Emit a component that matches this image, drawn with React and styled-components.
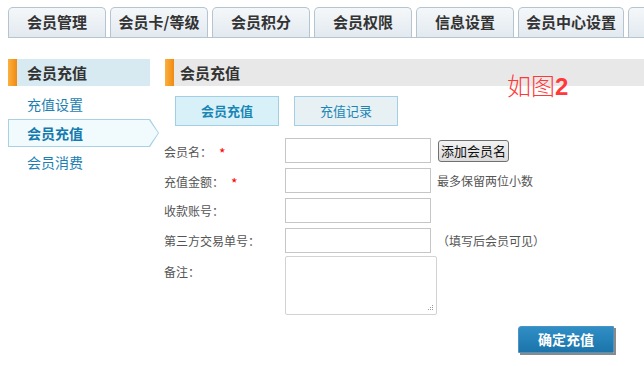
import React from 'react';
import styled, { createGlobalStyle, css } from 'styled-components';

const GlobalStyle = createGlobalStyle`
	html, body {
		margin: 0;
		padding: 0;
		background: #fff;
		overflow: hidden;
	}
	body {
		font-family: "Noto Sans CJK SC", "Liberation Sans", sans-serif;
		color: #333;
	}
`;

const Page = styled.div`
	width: 644px;
	height: 366px;
	padding: 7px 0 0 8px;
	box-sizing: border-box;
	position: relative;
	overflow: hidden;
`;

const TabBar = styled.div`
	display: flex;
	gap: 4px;
	height: 30px;
	border-bottom: 1px solid #b4c4d1;
	white-space: nowrap;
`;

const Tab = styled.div`
	flex: none;
	min-width: 98px;
	padding: 0 7px;
	box-sizing: border-box;
	height: 30px;
	line-height: 28px;
	text-align: center;
	font-size: 15px;
	font-weight: bold;
	color: #333;
	border: 1px solid #b4c4d1;
	border-bottom: none;
	border-radius: 5px 5px 0 0;
	background: linear-gradient(#f5f8fa, #e2e9ef);
`;

const Body = styled.div`
	display: flex;
	margin-top: 21px;
`;

const Sidebar = styled.div`
	width: 142px;
	flex: none;
`;

const Heading = styled.div`
	height: 27px;
	line-height: 27px;
	font-size: 15px;
	font-weight: bold;
	color: #333;
	border-left: 9px solid #f39419;
	padding-left: ${props => props.indent}px;
	background: ${props => props.bg};
	position: relative;
	&::before {
		content: '';
		position: absolute;
		left: -9px;
		top: 0;
		width: 9px;
		height: 100%;
		background: linear-gradient(90deg, #fbb040, #f08a10);
	}
`;

const MenuList = styled.div`
	margin-top: 4px;
	display: flex;
	flex-direction: column;
	gap: 1px;
`;

const MenuItem = styled.div`
	height: 28px;
	line-height: 28px;
	padding-left: 19px;
	font-size: 14px;
	color: #1b7fb3;
	position: relative;
	${props => props.active && css`
		width: 151px;
		box-sizing: border-box;
		font-weight: bold;
		color: #137aae;
		background: #a9d1e6;
		clip-path: polygon(0 0, calc(100% - 9px) 0, 100% 50%, calc(100% - 9px) 100%, 0 100%);
		&::before {
			content: '';
			position: absolute;
			inset: 1px;
			background: #f1fafd;
			clip-path: polygon(0 0, calc(100% - 9px) 0, 100% 50%, calc(100% - 9px) 100%, 0 100%);
		}
		span { position: relative; }
	`}
`;

const Main = styled.div`
	flex: 1;
	margin-left: 15px;
	position: relative;
`;

const Note = styled.div`
	position: absolute;
	left: 342px;
	top: 8px;
	font-size: 24px;
	color: #ff3838;
	font-family: "Noto Sans CJK SC", sans-serif;
	font-weight: 300;
	b {
		font-family: "Liberation Sans", sans-serif;
		font-weight: bold;
		font-size: 24px;
	}
`;

const SubTabs = styled.div`
	display: flex;
	gap: 15px;
	margin: 10px 0 0 10px;
`;

const SubTab = styled.div`
	width: 104px;
	height: 30px;
	box-sizing: border-box;
	line-height: 28px;
	text-align: center;
	font-size: 13px;
	color: #1a86b6;
	border: 1px solid #a3cfe4;
	background: ${props => props.active ? '#d8f1f8' : '#e7f0f3'};
	font-weight: ${props => props.active ? 'bold' : 'normal'};
`;

const Form = styled.div`
	margin-top: 12px;
	margin-left: -1px;
	display: flex;
	flex-direction: column;
	gap: 5px;
`;

const Row = styled.div`
	display: flex;
	align-items: ${props => props.top ? 'flex-start' : 'center'};
	min-height: 25px;
	font-size: 12px;
	color: #555;
`;

const Label = styled.div`
	width: 121px;
	flex: none;
	padding-top: ${props => props.top ? '5px' : '0'};
`;

const Star = styled.span`
	color: #f00;
	font-size: 14px;
	margin-left: 7px;
	position: relative;
	top: 2px;
`;

const Input = styled.div`
	width: 146px;
	height: 25px;
	box-sizing: border-box;
	border: 1px solid #c6c6c6;
	background: #fff;
`;

const TextArea = styled.div`
	width: 152px;
	height: 59px;
	box-sizing: border-box;
	border: 1px solid #cfd3d6;
	border-radius: 2px;
	position: relative;
	margin-top: -2px;
	svg {
		position: absolute;
		right: 2px;
		bottom: 2px;
	}
`;

const Hint = styled.span`
	margin-left: 6px;
	color: #555;
`;

const AddButton = styled.div`
	margin-left: 7px;
	height: 22px;
	line-height: 20px;
	padding: 0 2px;
	box-sizing: border-box;
	font-size: 13px;
	color: #111;
	border: 1px solid #707070;
	border-radius: 3px;
	background: linear-gradient(#f2f2f2, #dcdcdc);
`;

const Submit = styled.div`
	margin: 11px 0 0 353px;
	width: 96px;
	height: 27px;
	box-sizing: border-box;
	line-height: 25px;
	text-align: center;
	font-size: 14px;
	font-weight: bold;
	color: #fff;
	border: 1px solid #4c93c0;
	border-radius: 3px 0 0 0;
	background: linear-gradient(#2f8fc6, #1c74aa);
	box-shadow: 2px 2px 0 #8a8a8a;
`;

const tabs = ['会员管理', '会员卡/等级', '会员积分', '会员权限', '信息设置', '会员中心设置', '查'];

const App = () => {
	return (
		<Page>
			<GlobalStyle />
			<TabBar>
				{tabs.map(t => <Tab key={t}>{t}</Tab>)}
			</TabBar>
			<Body>
				<Sidebar>
					<Heading indent={10} bg="#d7e9f1">会员充值</Heading>
					<MenuList>
						<MenuItem>充值设置</MenuItem>
						<MenuItem active><span>会员充值</span></MenuItem>
						<MenuItem>会员消费</MenuItem>
					</MenuList>
				</Sidebar>
				<Main>
					<Heading indent={6} bg="#e8e8e8">会员充值</Heading>
					<Note>如图<b>2</b></Note>
					<SubTabs>
						<SubTab active>会员充值</SubTab>
						<SubTab>充值记录</SubTab>
					</SubTabs>
					<Form>
						<Row>
							<Label>会员名：<Star>*</Star></Label>
							<Input />
							<AddButton>添加会员名</AddButton>
						</Row>
						<Row>
							<Label>充值金额：<Star>*</Star></Label>
							<Input />
							<Hint>最多保留两位小数</Hint>
						</Row>
						<Row>
							<Label>收款账号：</Label>
							<Input />
						</Row>
						<Row>
							<Label>第三方交易单号：</Label>
							<Input />
							<Hint>（填写后会员可见）</Hint>
						</Row>
						<Row top>
							<Label top>备注：</Label>
							<TextArea>
								<svg width="7" height="7" viewBox="0 0 7 7">
									<g fill="#999">
										<rect x="5" y="0" width="1" height="1" />
										<rect x="3" y="2" width="1" height="1" />
										<rect x="5" y="2" width="1" height="1" />
										<rect x="1" y="4" width="1" height="1" />
										<rect x="3" y="4" width="1" height="1" />
										<rect x="5" y="4" width="1" height="1" />
									</g>
								</svg>
							</TextArea>
						</Row>
					</Form>
					<Submit>确定充值</Submit>
				</Main>
			</Body>
		</Page>
	);
};

export default App;
